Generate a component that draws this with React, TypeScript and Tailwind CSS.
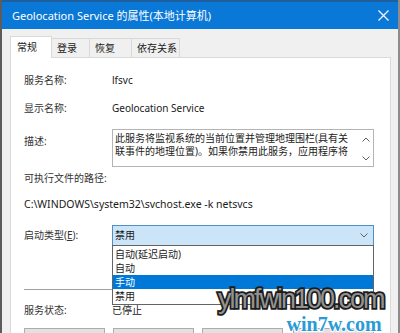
import React from "react";

const tabs = [
  { label: "常规", w: "w-[42px]", active: true },
  { label: "登录", w: "w-[38px]" },
  { label: "恢复", w: "w-[42px]" },
  { label: "依存关系", w: "w-[48px]" },
];

const options = ["自动(延迟启动)", "自动", "手动", "禁用"];

function Chevron({ up = false }: { up?: boolean }) {
  return (
    <svg width="8" height="5" viewBox="0 0 8 5" className="text-[#606060]">
      <path
        d={up ? "M0.5 4.5 L4 1 L7.5 4.5" : "M0.5 0.5 L4 4 L7.5 0.5"}
        fill="none"
        stroke="currentColor"
        strokeWidth="1"
      />
    </svg>
  );
}

export default function App() {
  return (
    <div className="relative w-[400px] h-[333px] overflow-hidden bg-[#f0f0f0] border-l-2 border-r-2 border-l-[#5c5c5c] border-r-[#8c8c8c] font-['Noto_Sans','Noto_Sans_CJK_SC',sans-serif] text-[10px] text-[#1a1a1a]">
      {/* title bar */}
      <div className="h-[29px] bg-[#0a78d6] border-t-2 border-[#1f5f9e] flex items-center justify-between pl-[10px] pr-[9px] text-white">
        <span className="text-[11px] leading-none">Geolocation Service 的属性(本地计算机)</span>
        <svg width="11" height="11" viewBox="0 0 11 11">
          <path d="M0.5 0.5 L10.5 10.5 M10.5 0.5 L0.5 10.5" stroke="white" strokeWidth="1.2" />
        </svg>
      </div>

      <div className="pl-[8px] pr-[7px] pt-[7px]">
        {/* tabs */}
        <div className="flex items-end h-[22px] relative z-10">
          {tabs.map((t) =>
            t.active ? (
              <div
                key={t.label}
                className={`${t.w} h-[22px] bg-white border border-b-0 border-[#d9d9d9] pl-[6px] flex items-center`}
              >
                {t.label}
              </div>
            ) : (
              <div
                key={t.label}
                className={`${t.w} h-[20px] border-t border-r border-[#d9d9d9] pl-[5px] flex items-center`}
              >
                {t.label}
              </div>
            )
          )}
        </div>

        {/* panel */}
        <div className="-mt-px bg-white border border-[#d9d9d9] h-[300px] pl-[13px] pr-[16px]">
          <div className="flex items-center h-[16px] mt-[14px]">
            <span className="w-[88px] text-[#333]">服务名称:</span>
            <span>lfsvc</span>
          </div>
          <div className="flex items-center h-[16px] mt-[12px]">
            <span className="w-[88px] text-[#333]">显示名称:</span>
            <span>Geolocation Service</span>
          </div>

          <div className="flex mt-[13px]">
            <span className="w-[88px] pt-[5px] text-[#333]">描述:</span>
            <div className="flex-1 h-[38px] border border-[#b4b4b4] flex pl-[2px] pt-[2px] leading-[13px]">
              <div className="flex-1 text-[#222]">
                此服务将监视系统的当前位置并管理地理围栏(具有关
                <br />
                联事件的地理位置)。如果你禁用此服务，应用程序将
              </div>
              <div className="w-[14px] flex flex-col items-center justify-between py-[5px]">
                <Chevron up />
                <Chevron />
              </div>
            </div>
          </div>

          <div className="h-[16px] flex items-center mt-[3px] text-[#333]">可执行文件的路径:</div>
          <div className="h-[16px] flex items-center mt-[11px] text-[10.5px]">
            C:\WINDOWS\system32\svchost.exe -k netsvcs
          </div>

          <div className="flex items-center mt-[12px]">
            <span className="w-[88px] text-[#333]">
              启动类型(<span className="underline">E</span>):
            </span>
            <div className="relative flex-1">
              <div className="h-[21px] bg-[#cce4f7] border border-[#4d8fc8] flex items-center justify-between pl-[2px] pr-[5px]">
                <span>禁用</span>
                <Chevron />
              </div>
              {/* open list */}
              <div className="absolute left-0 right-0 top-[20px] z-20 bg-white border border-[#646464] py-px">
                {options.map((o) => (
                  <div
                    key={o}
                    className={`h-[14px] leading-[14px] pl-[2px] ${o === "手动" ? "bg-[#0078d7] text-white" : ""}`}
                  >
                    {o}
                  </div>
                ))}
              </div>
            </div>
          </div>

          <div className="mt-[43px] border-t border-[#a0a0a0]" />

          <div className="flex items-center h-[16px] mt-[12px]">
            <span className="w-[88px] text-[#333]">服务状态:</span>
            <span>已停止</span>
          </div>

          <div className="flex mt-[10px] gap-[8px]">
            <div className="w-[81px] h-[22px] bg-[#e1e1e1] border border-[#adadad]" />
            <div className="w-[81px] h-[22px] bg-[#e1e1e1] border border-[#adadad]" />
            <div className="w-[81px] h-[22px] bg-[#e1e1e1] border border-[#adadad]" />
            <div className="ml-[2px] w-[81px] h-[22px] bg-[#e1e1e1] border border-[#adadad]" />
          </div>
        </div>
      </div>

      {/* watermark */}
      <div className="absolute left-[216px] top-[286px] z-30 flex flex-col items-end pointer-events-none">
        <span className="font-['Liberation_Sans',sans-serif] text-[27px] leading-none tracking-[-2px] text-[#929292] [-webkit-text-stroke:3.5px_#1c1c1c] [paint-order:stroke_fill]">
          ylmfwin100.com
        </span>
        <span className="mt-[1px] mr-[2px] font-['Liberation_Serif',serif] font-bold text-[20px] leading-none text-[#2a9bd6] [-webkit-text-stroke:2px_white] [paint-order:stroke_fill]">
          win7w.com
        </span>
      </div>
    </div>
  );
}
